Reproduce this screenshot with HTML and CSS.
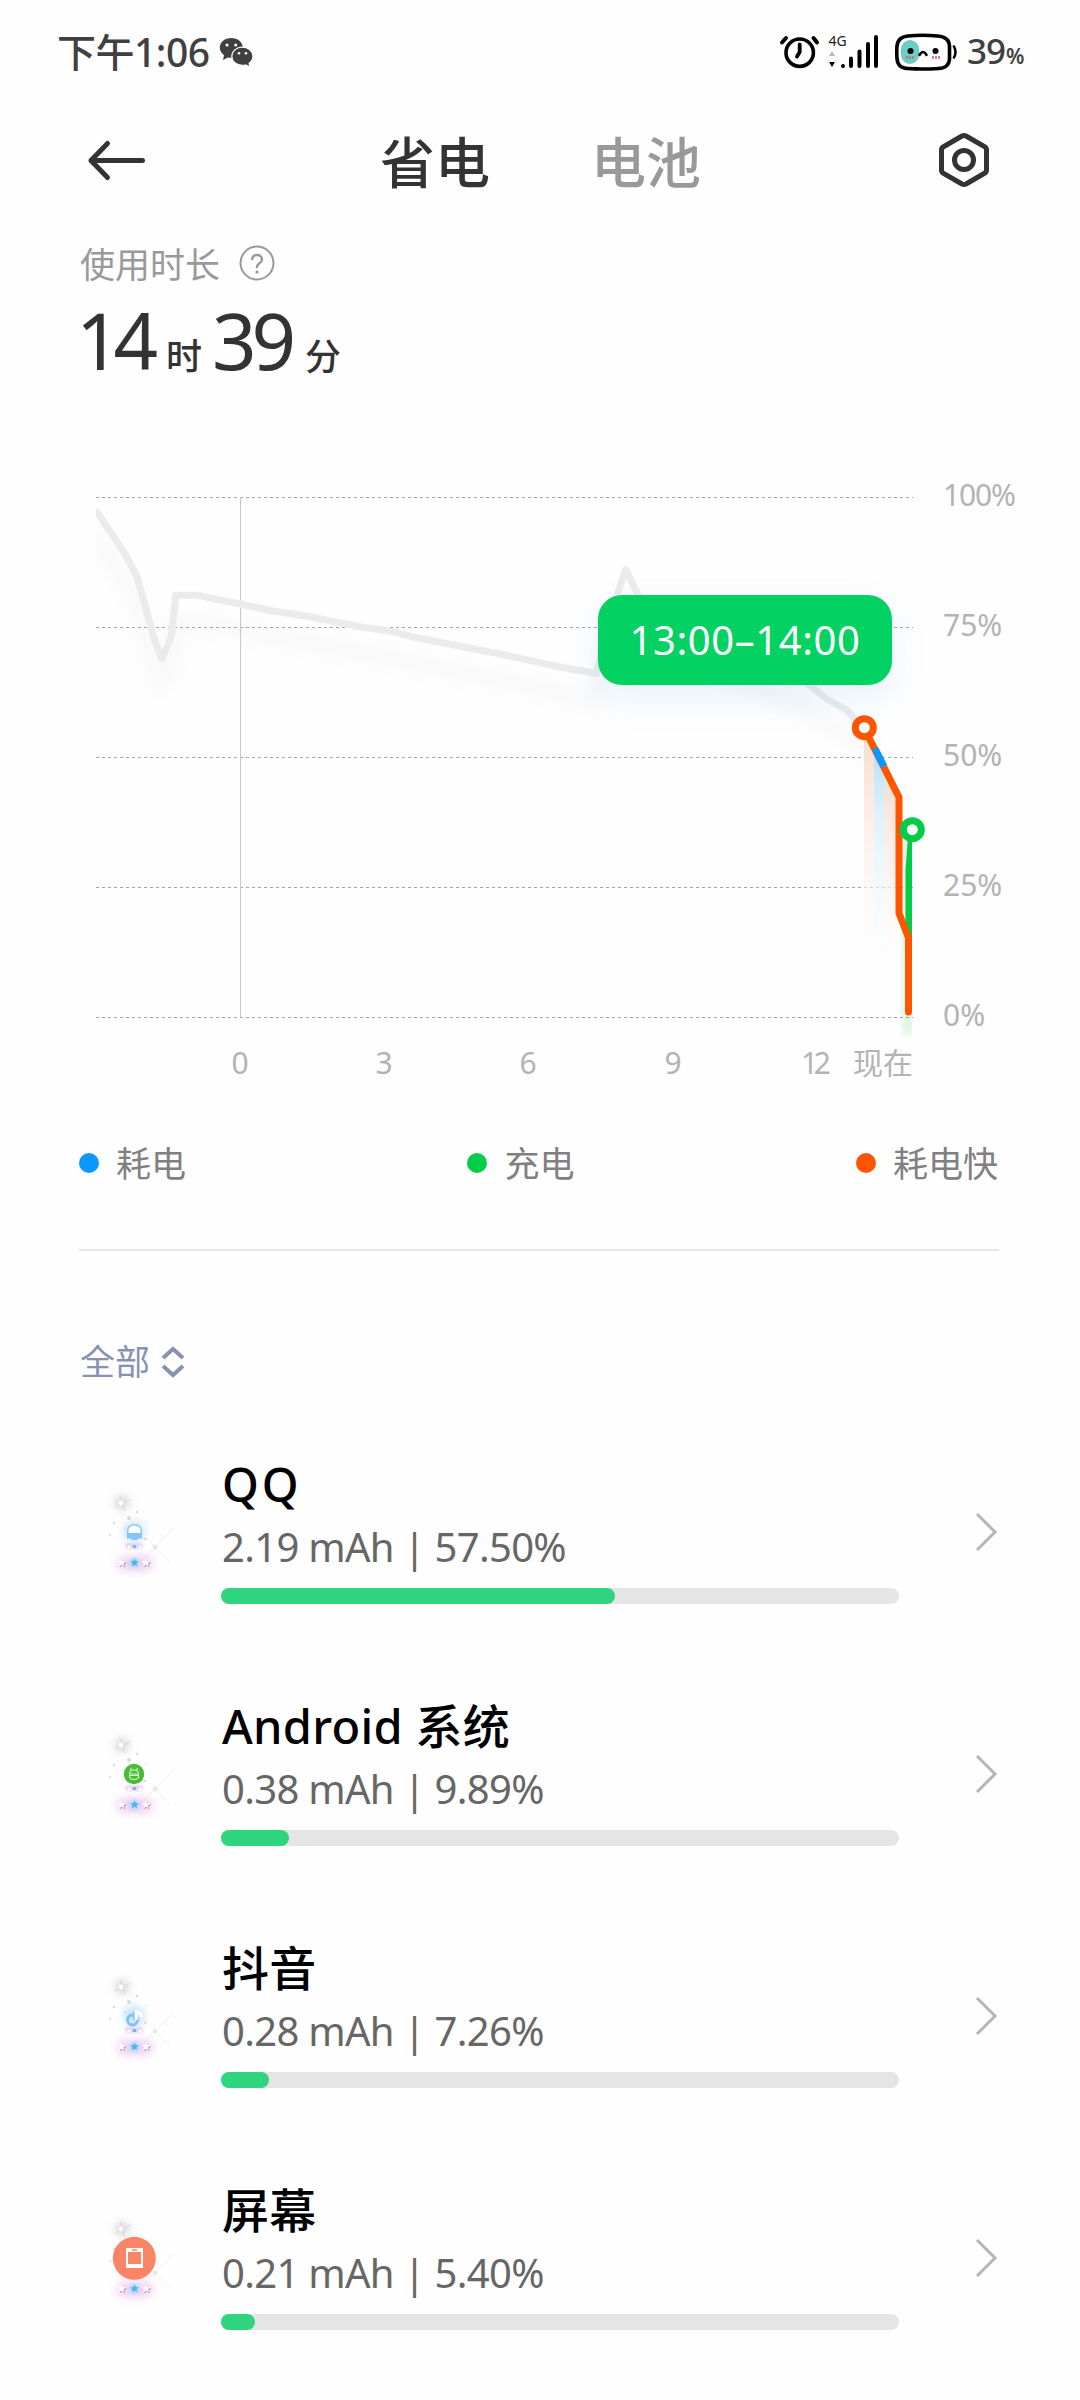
FILE: index.html
```html
<!DOCTYPE html>
<html lang="zh-CN">
<head>
<meta charset="utf-8">
<title>省电</title>
<link rel="stylesheet" href="styles.css">
</head>
<body>
<svg class="defs" width="0" height="0">
  <defs>
    <filter id="b2" x="-100%" y="-100%" width="300%" height="300%"><feGaussianBlur stdDeviation="1"/></filter>
    <filter id="b4" x="-100%" y="-100%" width="300%" height="300%"><feGaussianBlur stdDeviation="4"/></filter>
    <path id="star" d="M0-4.200 1.300-1.400 4.200-1.100 2 .9 2.700 3.800 0 2.300-2.700 3.800-2 .9-4.200-1.100-1.300-1.400Z"/>
    <g id="sparkle">
      <circle cx="22" cy="23" r="7" fill="#bbb" opacity=".6" filter="url(#b4)"/>
      <path d="M15 27 31 19M20 16 25 31" stroke="#c8c8c8" stroke-width="1" opacity=".5"/>
      <circle cx="21" cy="23" r="2.400" fill="#fff"/>
      <g fill="#dadada"><circle cx="37" cy="32" r="1.200"/><circle cx="29" cy="38" r="2"/><circle cx="14" cy="43" r="1.300"/><circle cx="46" cy="42" r=".8"/><circle cx="10" cy="55" r="1.100"/><circle cx="45" cy="59" r="1.200"/><circle cx="25" cy="48" r="1"/><circle cx="55" cy="67" r="2"/></g>
      <path d="M44 78 74 48M46 57 70 83" stroke="#f0f0f0" stroke-width="1"/>
    </g>
    <g id="base">
      <rect x="17" y="76" width="36" height="15" rx="7" fill="#e08fe0" opacity=".4" filter="url(#b4)"/>
      <rect x="25" y="63" width="18" height="6" rx="3" fill="#ecc2ec" opacity=".7" filter="url(#b2)"/>
      <circle cx="29" cy="67" r="1.500" fill="#fff"/><circle cx="40" cy="67" r="1.500" fill="#fff"/><circle cx="34.500" cy="66.500" r="1.700" fill="#5cb8f4"/>
      <circle cx="34.500" cy="83" r="6" fill="#b5dafa" opacity=".7" filter="url(#b2)"/>
      <use href="#star" x="22.500" y="83.500" fill="#b89cba"/><use href="#star" x="47" y="83.500" fill="#b89cba"/>
      <use href="#star" x="21.500" y="82.500" fill="#fff"/><use href="#star" x="46" y="82.500" fill="#fff"/><use href="#star" x="34.500" y="82.500" fill="#4db5f2"/>
    </g>
  </defs>
</svg>

<header class="status">
  <span class="clock">下午1:06</span>
  <svg class="wechat" width="36" height="32" viewBox="218 36 36 32">
    <path fill="#404040" d="M231.300 38c-6.500 0-11.500 4.200-11.500 9.600 0 3 1.600 5.800 4.200 7.600l-1 4.800 5-2.600c1 .3 2.200.4 3.300.4 6.400 0 11.500-4.300 11.500-10.100C242.800 42.200 237.700 38 231.300 38Z"/>
    <path fill="#404040" stroke="#fff" stroke-width="1.200" d="M242.300 47.200c-5.900 0-10.500 4-10.500 9.100s4.600 9.100 10.500 9.100c1.200 0 2.300-.1 3.400-.4l4.200 2-.8-3.700c2.400-1.700 3.900-4.200 3.900-7 0-5.100-4.800-9.100-10.700-9.100Z"/>
    <g fill="#fff"><circle cx="227" cy="45" r="1.500"/><circle cx="235.700" cy="45" r="1.500"/><circle cx="239" cy="53.300" r="1.300"/><circle cx="246" cy="53.300" r="1.300"/></g>
  </svg>
  <span class="grow"></span>
  <svg width="42" height="36" viewBox="779 34 42 36" fill="none" stroke="#000" stroke-linecap="round">
    <circle cx="799.700" cy="52.700" r="13.700" stroke-width="3.600"/>
    <path stroke-width="3.800" d="M799.700 44.500V52l-2.700 4.500"/>
    <path stroke-width="4" d="M782 42.500 786 38M813.500 38 817 42.500"/>
  </svg>
  <svg class="signal" width="52" height="44" viewBox="828 30 52 44">
    <text x="828.500" y="46.300" class="net">4G</text>
    <path fill="#bbb" d="m832 51 3 5h-6z"/><path fill="#000" d="m832 67-3-5h6z"/>
    <path d="M843 66v0M851 58.500V66M859.500 51.500V66M868 44V66M876 37V66" stroke="#000" stroke-width="4" stroke-linecap="round"/>
  </svg>
  <svg class="battery" width="64" height="38" viewBox="894 33 64 38">
    <path d="M908 36q14-1.500 30 0 11 1 11.500 10v13q-.5 9-11 9.500-17 1-31 0-10-.5-10.500-10-.5-6 0-12Q897.500 37 908 36Z" fill="#fff" stroke="#000" stroke-width="3.600"/>
    <rect x="901" y="40" width="18" height="24" rx="9" fill="#6bcdc3"/>
    <circle cx="910.500" cy="51" r="3" /><circle cx="935.500" cy="51" r="3"/>
    <path d="M919.500 55q3.500-6 7 0M954 46.500q3 6 0 11" fill="none" stroke="#000" stroke-width="2.600" stroke-linecap="round"/>
    <path d="M907 56v3M910 56v3M913 56v3M933 56v3M936 56v3M939 56v3" stroke="#e3615f" stroke-width="1.600"/>
  </svg>
  <span class="pct">39<small>%</small></span>
</header>

<nav class="bar">
  <svg width="60" height="44" viewBox="86 138 60 44" fill="none" stroke="#333" stroke-width="5" stroke-linecap="round" stroke-linejoin="round"><path d="M107.500 143.500 91 160.500 107.500 177.500M91 160.500H142.500"/></svg>
  <div class="tabs"><b class="tab on">省电</b><b class="tab">电池</b></div>
  <svg width="54" height="58" viewBox="937 131 54 58" fill="none" stroke="#333" stroke-width="5" stroke-linejoin="round">
    <path d="M962 136q2-1 4 0l18.500 10.700q2 1.100 2 3.300v20q0 2.200-2 3.300L966 184q-2 1-4 0l-18.500-10.700q-2-1.100-2-3.300V150q0-2.200 2-3.300Z"/><circle cx="964" cy="160" r="9.500"/>
  </svg>
</nav>

<section class="usage">
  <div class="caption">使用时长
    <svg width="36" height="36" viewBox="0 0 36 36" fill="none" stroke="#999" stroke-width="2"><circle cx="18" cy="18" r="16.500"/><path stroke-width="2.400" d="M13 15c0-3.500 2.200-5 5-5s5 1.700 5 4.500c0 3.400-5 4-5 7.500v1"/><circle cx="18" cy="27" r="1.600" fill="#999" stroke="none"/></svg>
  </div>
  <div class="time"><b class="n1">14</b><span class="u1">时</span><b class="n2">39</b><span>分</span></div>
</section>

<section class="chart">
  <svg width="1080" height="680" viewBox="0 430 1080 680">
    <defs>
      <linearGradient id="go" x1="0" y1="0" x2="0" y2="1"><stop offset="0" stop-color="#f0dfcb"/><stop offset=".25" stop-color="#fdeae2"/><stop offset="1" stop-color="#fff" stop-opacity="0"/></linearGradient>
      <linearGradient id="gb" x1="0" y1="0" x2="0" y2="1"><stop offset="0" stop-color="#b9def5"/><stop offset=".25" stop-color="#dff1fd"/><stop offset="1" stop-color="#fff" stop-opacity="0"/></linearGradient>
      <clipPath id="plot"><rect x="96" y="480" width="816" height="580"/></clipPath>
      <filter id="soft" x="-20%" y="-20%" width="140%" height="150%"><feGaussianBlur stdDeviation="8"/></filter>
      <path id="level" d="M97 512 125 554 136.300 575 142.300 595 148.300 618 154 638 162 659 171.300 636.700 173.700 615 175.700 595.300H198.300L216.700 599.300 240.300 604 273 611 310 616.700 360 626.700 393.300 631.700 413.300 637 440 642.300 500 654 560 667 596.700 673.500 606 632 617 595 625.700 569.300 638 595 660 630 740 655 807 683 826.700 699 845 709 864 727.700"/>
    </defs>
    <path d="M96 497.500H913M96 627.500H913M96 757.500H913M96 887.500H913M96 1017.500H913" stroke="#a6a6a6" stroke-dasharray="3 3"/>
    <path d="M240.500 497V1017" stroke="#c8c8c8"/>
    <g clip-path="url(#plot)" fill="none" stroke-linejoin="round" stroke-linecap="round">
      <use href="#level" y="26" stroke="#777" stroke-width="14" opacity=".045" filter="url(#soft)"/>
      <use href="#level" stroke="#ebebeb" stroke-width="7"/>
      <path d="M864 728 874 747V1005H864Z" fill="url(#go)"/>
      <path d="M874 747 885 768V1010H874Z" fill="url(#gb)"/>
      <path d="M885 768 897 797V1010H885Z" fill="url(#go)"/>
      <path d="M904 830 908 950V1030" stroke="#25b83e" stroke-width="11" opacity=".16" filter="url(#b4)"/>
      <path d="M912 830 909 870V937" stroke="#03cd46" stroke-width="7"/>
      <path d="M864 727.700 899 797.300V913.300L908.500 937.700V1012" stroke="#ff5500" stroke-width="7"/>
      <path d="M875 748.500 884 766.500" stroke="#0898ff" stroke-width="7" stroke-linecap="butt"/>
    </g>
    <circle cx="864.300" cy="727.700" r="9" fill="#fff" stroke="#ff5500" stroke-width="7"/>
    <circle cx="912.300" cy="829.700" r="9" fill="#fff" stroke="#03cd46" stroke-width="7"/>
    <g class="axis">
      <text x="943" y="506" textLength="73">100%</text><text x="943" y="636">75%</text><text x="943" y="766">50%</text><text x="943" y="896">25%</text><text x="943" y="1026">0%</text>
      <g text-anchor="middle"><text x="240" y="1074">0</text><text x="384" y="1074">3</text><text x="528" y="1074">6</text><text x="673" y="1074">9</text><text x="816" y="1074" textLength="30">12</text><text x="883" y="1074">现在</text></g>
    </g>
  </svg>
  <div class="tip">13:00–14:00</div>
</section>

<section class="legend">
  <span class="item"><i class="dot blue"></i>耗电</span>
  <span class="item"><i class="dot green"></i>充电</span>
  <span class="item"><i class="dot orange"></i>耗电快</span>
</section>

<div class="filter">全部
  <svg width="24" height="32" viewBox="0 0 24 32" fill="none" stroke="#8991b3" stroke-width="4"><path d="m2 12 10-9 10 9M2 20l10 9 10-9"/></svg>
</div>

<main>
  <article class="row">
    <svg class="app" width="80" height="100" viewBox="0 0 80 100">
      <use href="#sparkle"/><use href="#base"/>
      <circle cx="34" cy="52" r="10" fill="#8cc8f5" opacity=".55" filter="url(#b4)"/>
      <path d="M27 59v-7q0-8 7.500-8t7.500 8v7l-3-1-2 2h-5l-2-2z" fill="#86c5f5"/>
      <path d="M28.500 53v-2q0-5.500 6-5.500t6 5.500v2z" fill="#fff"/>
    </svg>
    <div class="info"><h2 class="wide">QQ</h2><p>2.19 mAh | 57.50%</p><div class="track"><div class="fill" style="width:58.1%"></div></div></div>
    <svg class="go" width="26" height="42" viewBox="0 0 26 42"><path d="M4 3 22 21 4 39"/></svg>
  </article>
  <article class="row">
    <svg class="app" width="80" height="100" viewBox="0 0 80 100">
      <use href="#sparkle"/><use href="#base"/>
      <circle cx="34" cy="52" r="10.200" fill="#4bbb36"/>
      <g fill="none" stroke="#d8f5d0" stroke-width="1.100"><path d="M29.500 52q0-4 4.500-4t4.500 4zM29.500 53.500v2q1 2 4.500 2t4.500-2v-2zM30.500 46l1 2.500M37.500 46l-1 2.500"/></g>
    </svg>
    <div class="info"><h2>Android 系统</h2><p>0.38 mAh | 9.89%</p><div class="track"><div class="fill" style="width:10.03%"></div></div></div>
    <svg class="go" width="26" height="42" viewBox="0 0 26 42"><path d="M4 3 22 21 4 39"/></svg>
  </article>
  <article class="row">
    <svg class="app" width="80" height="100" viewBox="0 0 80 100">
      <use href="#sparkle"/><use href="#base"/>
      <circle cx="34" cy="52" r="10" fill="#8cc8f5" opacity=".55" filter="url(#b4)"/>
      <circle cx="32.500" cy="56" r="5" fill="none" stroke="#80c2f3" stroke-width="3"/>
      <path d="M36 56V48q5 0 5.500 5" fill="none" stroke="#fff" stroke-width="3.500"/><path d="M34 56V47" stroke="#80c2f3" stroke-width="1.200"/>
    </svg>
    <div class="info"><h2>抖音</h2><p>0.28 mAh | 7.26%</p><div class="track"><div class="fill" style="width:7.1%"></div></div></div>
    <svg class="go" width="26" height="42" viewBox="0 0 26 42"><path d="M4 3 22 21 4 39"/></svg>
  </article>
  <article class="row">
    <svg class="app" width="80" height="100" viewBox="0 0 80 100">
      <use href="#sparkle"/><use href="#base"/>
      <circle cx="34.300" cy="52.300" r="21.500" fill="#fa8566"/>
      <path fill="#fff" fill-rule="evenodd" d="M27 42h15q1 0 1 1v18q0 1-1 1H27q-1 0-1-1V43q0-1 1-1ZM28 46v12h13V46ZM32 43.300v1.500h5v-1.500Z"/>
    </svg>
    <div class="info"><h2>屏幕</h2><p>0.21 mAh | 5.40%</p><div class="track"><div class="fill" style="width:5.02%"></div></div></div>
    <svg class="go" width="26" height="42" viewBox="0 0 26 42"><path d="M4 3 22 21 4 39"/></svg>
  </article>
</main>
</body>
</html>
```

FILE: styles.css
```css
* { box-sizing: border-box; margin: 0; padding: 0; }
body { width: 1080px; height: 2400px; overflow: hidden; background: #fefefe; color: #333; font-family: "Noto Sans", "Noto Sans CJK SC", sans-serif; }
svg { display: block; flex: none; }
.defs { position: absolute; }
.status { height: 104px; padding: 0 54px 0 57px; display: flex; align-items: center; color: #404040; }
.clock { font-size: 39px; font-weight: 500; letter-spacing: -.5px; line-height: 52px; white-space: nowrap; width: 161px; }
.grow { flex: 1; }
.signal { margin-left: 7px; overflow: visible; }
.net { font-size: 14px; fill: #222; }
.battery { margin-left: 14px; }
.pct { margin-left: 9px; width: 59px; font-size: 35px; font-weight: 500; letter-spacing: -1px; white-space: nowrap; line-height: 56px; padding-top: 2px; }
.pct small { font-size: 21px; font-weight: 600; margin-left: 1px; }
.bar { height: 112px; padding: 0 89px 0 86px; display: flex; align-items: center; }
.tabs { display: flex; flex: 1; gap: 101px; padding-left: 234px; margin-top: -3px; }
.tab { font: 500 55px/80px "Noto Sans CJK SC", sans-serif; color: #999; white-space: nowrap; }
.tab.on { color: #333; }
.usage { height: 214px; padding: 23px 80px 0; }
.caption { height: 50px; display: flex; align-items: center; gap: 19px; font-size: 35px; line-height: 54px; color: #999; }
.caption { padding-top: 1px; }
.caption svg { margin-bottom: 4px; }
.time { display: flex; align-items: baseline; height: 100px; line-height: 100px; font-size: 36px; font-weight: 500; white-space: nowrap; padding-top: 1px; }
.time b { font-size: 78px; font-weight: 400; letter-spacing: -7px; }
.n1 { width: 90px; margin-left: -4px; }
.u1 { width: 46px; }
.time .n2 { width: 93px; letter-spacing: -5px; }
.chart { position: relative; height: 680px; }
.axis { font-size: 30px; fill: #b3b3b3; }
.tip { position: absolute; left: 598px; top: 165px; width: 294px; height: 90px; border-radius: 24px; background: #03d162; color: #fff; font-size: 40px; letter-spacing: .6px; line-height: 90px; text-align: center; box-shadow: 0 14px 36px rgba(0, 135, 255, .1); }
.legend { margin: 0 81px 0 79px; height: 141px; padding: 1px 1px 32px 0; border-bottom: 2px solid #e5e5e5; display: flex; justify-content: space-between; align-items: center; }
.item { display: flex; align-items: center; font-size: 35px; line-height: 54px; color: #808080; }
.dot { width: 20px; height: 20px; border-radius: 50%; margin: -2px 17px 0 0; }
.blue { background: #0898ff; }
.green { background: #03cd46; }
.orange { background: #ff5500; }
.filter { height: 160px; padding: 62px 0 0 80px; display: flex; align-items: flex-start; gap: 11px; font-size: 35px; line-height: 98px; color: #8991b3; }
.filter svg { margin-top: 33px; }
.row { height: 242px; padding: 42px 80px 0 100px; display: flex; }
.app { margin-top: 27px; }
.info { width: 678px; margin-left: 41px; }
h2 { height: 60px; font-size: 47px; font-weight: 500; line-height: 62px; letter-spacing: .3px; padding-left: 1px; color: #000; white-space: nowrap; }
.wide { letter-spacing: 3px; }
p { height: 50px; margin: 8px 0 17px; font-size: 40px; line-height: 52px; letter-spacing: -.7px; padding-left: 1px; color: #666; white-space: nowrap; }
.track { height: 16px; border-radius: 8px; background: #e5e5e5; }
.fill { height: 16px; border-radius: 8px; background: #2fd57e; }
.go { margin: 58px 0 0 74px; fill: none; stroke: #b5b5b5; stroke-width: 3; }
```
